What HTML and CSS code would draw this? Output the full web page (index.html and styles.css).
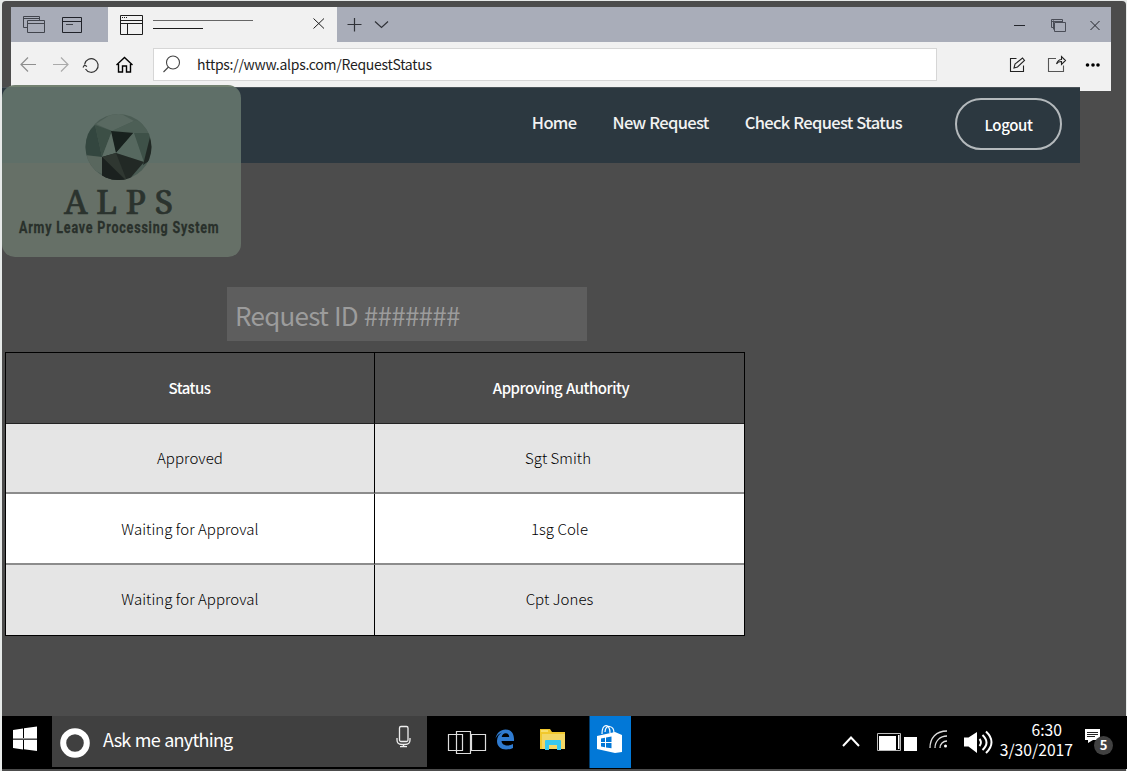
FILE: index.html
```html
<!DOCTYPE html>
<html lang="en">
<head>
<meta charset="utf-8">
<title>ALPS - Request Status</title>
<link rel="stylesheet" href="styles.css">
</head>
<body>
<div class="desktop">
  <section class="browser">
    <div class="tabstrip">
      <div class="tabtools">
        <svg width="97" height="35" fill="none" stroke="#41444c"><path d="M16.500 20.500h-4v-11h16v4M12.500 11.500h16M16.500 13.500h17v12h-17zM16.500 16.500h17"/><path stroke="#202229" d="M51.500 10.500h19v15h-19zM51.500 14.500h19"/><path d="M55 17.500h7"/></svg>
      </div>
      <div class="tab">
        <svg width="229" height="35" fill="none" stroke="#1c1c1c"><path d="M12.500 8.500h22v19h-22zM12.500 13.500h22M12.500 16.500h22M19.500 16.500v11"/><path stroke-dasharray="1 1" d="M14 10.500h5"/><path stroke="#666" d="M45 13.500h100"/><path d="M45 21.500h50M205.500 11.500l10.500 10M216 11.500l-10.500 10"/></svg>
      </div>
      <svg width="60" height="35" fill="none" stroke="#303238" stroke-width="1.200"><path d="M10.500 17.500h14M17.500 11v13.500M38 14.500l6.500 6 6.500-6"/></svg>
      <svg class="winctl" width="110" height="35" fill="none" stroke="#24262d"><path d="M13 18.500h11M89.500 14l9 9M98.500 14l-9 9"/><path stroke="#4a4d57" d="M52.500 20.500h-2v-8h11v3M50.500 14.500h11M53.500 15.500h11v9h-11zM52.500 22.500v-9"/></svg>
    </div>
    <div class="toolbar">
      <svg width="142" height="48" fill="none" stroke="#8f8f8f" stroke-width="1.200"><path d="M25 22.500h-15M17 15.500l-7 7 7 7"/><path stroke="#aaa" d="M42 22.500h15M50 15.500l7 7-7 7"/><path stroke="#333" d="M74.500 27a6.800 6.800 0 1 0-.8-5M72 25.500l1.500-2.500 2.500 1.500"/><path stroke="#000" stroke-width="1.400" d="M105.500 23l8-7.500 8 7.500M107.500 22v8h4v-6h4v6h4v-8"/></svg>
      <div class="address">
        <svg width="43" height="32" fill="none" stroke="#444" stroke-width="1.100"><circle cx="19" cy="13.500" r="6.500"/><path d="M14.500 18l-5 5"/></svg>
        <span class="url">https://www.alps.com/RequestStatus</span>
      </div>
      <svg class="actions" width="110" height="48" fill="none" stroke="#222" stroke-width="1.100"><path d="M15.500 16.500h-6v13h13v-6M13 26l1-4 7.500-6 2 2.500-7 6.500z"/><path stroke="#555" d="M55 16.500h-7.500v13h15v-6"/><path d="M55.500 22c1-3 3-4.500 5-4.500v-3l4 4-4 4v-3c-3 0-4 .5-5 2.500z"/><g fill="#000" stroke="none"><circle cx="86.500" cy="23" r="1.800"/><circle cx="92" cy="23" r="1.800"/><circle cx="97" cy="23" r="1.800"/></g></svg>
    </div>
  </section>

  <header class="navbar">
    <nav class="links"><a>Home</a><a>New Request</a><a>Check Request Status</a></nav>
    <button class="logout">Logout</button>
    <div class="logo">
      <svg width="239" height="172">
        <defs><clipPath id="ball"><circle cx="116.500" cy="62" r="33"/></clipPath></defs>
        <g clip-path="url(#ball)">
          <path fill="#4b5c54" d="M83 29h68v67H83z"/>
          <path fill="#596961" d="M94 39l20-13 18 10-22 10z"/>
          <path fill="#4d5f56" d="M132 36l20 0v14h-20zM94 39l16 7 22-10v11l-22-1z"/>
          <path fill="#33463f" d="M93 40l-14 14v17l21 1z"/>
          <path fill="#3c4f46" d="M93 40l17 6-10 26z"/>
          <path fill="#5e6f66" d="M110 46l4 22-14 4z"/>
          <path fill="#18211e" d="M109 46l23 2-18 20z"/>
          <path fill="#56685f" d="M132 47l10 30-28-9z"/>
          <path fill="#3e5148" d="M132 48h18l-8 29z"/>
          <path fill="#202824" d="M148 52l5 20-12 8z"/>
          <path fill="#59675e" d="M83 70l17 2v17l-12-6z"/>
          <path fill="#222925" d="M100 72l14-4 28 9-17 20H100z"/>
          <path fill="#2f3731" d="M100 72l14-4 11 28z"/>
          <path fill="#1b211f" d="M100 72v25h25z"/>
        </g>
        <text class="brand" x="62" y="129" textLength="109">ALPS</text>
        <text class="tagline" transform="translate(17 148) scale(.78 1)" textLength="256">Army Leave Processing System</text>
      </svg>
    </div>
  </header>

  <main class="content">
    <div class="request-id">Request ID #######</div>
    <div class="table">
      <div class="cell head"><span class="status">Status</span></div><div class="cell head"><span class="authority">Approving Authority</span></div>
      <div class="cell odd">Approved</div><div class="cell odd"><span class="smith">Sgt Smith</span></div>
      <div class="cell even">Waiting for Approval</div><div class="cell even">1sg Cole</div>
      <div class="cell odd last">Waiting for Approval</div><div class="cell odd last">Cpt Jones</div>
    </div>
  </main>

  <footer class="taskbar">
    <div class="start"><svg width="50" height="52" fill="#fff"><path d="M11 14l10-1.500v10H11zM22 12.300l13-1.800v12H22zM11 24h10v9.500L11 32zM22 24h13v11l-13-1.800z"/><path fill="#999" d="M11 22h24v1.500H11z"/></svg></div>
    <div class="search">
      <svg width="51" height="51"><circle cx="23" cy="27" r="11.800" fill="none" stroke="#fff" stroke-width="6"/></svg>
      <span class="ask">Ask me anything</span>
      <svg class="mic" width="34" height="51" fill="none" stroke="#eee" stroke-width="1.300"><rect x="6.500" y="10.500" width="8.500" height="15" rx="1.500"/><path d="M4 22v2q0 4.500 5 4.500h3q5 0 5-4.500v-2M10.500 28.500v2M7 30.700h7"/></svg>
    </div>
    <div class="apps">
      <svg width="204" height="53">
        <path fill="none" stroke="#ddd" stroke-width="1.200" d="M21.500 18.500h14v16h-14zM29.500 15.500h14v22h-14zM44.500 18.500h14v16h-14z"/>
        <path fill="#2f7bd0" d="M68.500 23c1-6 5-9.500 10-9.500 6 0 9 4.500 8.500 11.500H74.500c.2 3 3 4.500 6 4.500 2 0 4-.7 5.500-1.500v4c-2 1-4 1.500-7 1.500-5 0-9-3-9-8.500 0-4 2-7 5-8.500-3 1-5 3-6.500 6zM74.700 21h7.500c0-2-1-3.800-3.500-3.800-2 0-3.700 1.600-4 3.800z"/>
        <path fill="#f1c82e" d="M113 13h10l2 3h13v17h-25z"/><path fill="#f3d765" d="M115 18h23v15h-23z"/><path fill="#fff5a8" d="M114 14.500h7v1h-7z"/><path fill="#36c8ef" d="M118 24h15q1 0 1 1v9h-4v-5h-8v5h-4v-9q0-1 1-1z"/>
        <path fill="#0278d7" d="M162.500 0h41.500v52h-41.500z"/><path fill="#fff" d="M170 20l18-4 7 3v17l-7 1-18-4z"/><path fill="none" stroke="#fff" stroke-width="1.200" d="M175 18c0-11 8-11 8-1M178 16c0-8 9-7 9 1"/><path fill="#0278d7" d="M174 22.500l4-.8v4.300h-4zM179 21.500l5.500-1V26H179zM174 27h4v4.200l-4-.7zM179 27h5.500v5.300l-5.500-.9z"/>
      </svg>
    </div>
    <div class="tray">
      <svg width="165" height="53" fill="none" stroke="#fff">
        <path stroke-width="2" d="M12 30l8-8.500 8 8.500"/>
        <path stroke="#bbb" d="M46.500 17.500h23v17h-23z"/><path fill="#fff" stroke="none" d="M48 20h17v14H48zM73 21h13v14H73zM67 19h1.500v14H67z"/>
        <path stroke-width="1.300" stroke="#ddd" d="M99 32c0-10 6-17 17-17M104 32c0-7 5-12 12-12M109 32c0-4 3-7 7-7"/><circle cx="114.500" cy="30" r="1.500" fill="#fff" stroke="none"/>
        <path fill="#fff" stroke="none" d="M133 21.500h4.500L146 16v21l-8.500-6.500H133z"/><path stroke-width="2" d="M148.500 23q3 3.500 0 7M151.500 19q8 7.500 0 15M155 15.500q11 10.500 0 21.500"/>
      </svg>
      <div class="clock"><span class="time">6:30</span><span class="date">3/30/2017</span></div>
      <div class="notice"><svg width="20" height="20"><path fill="#fff" d="M1 1h15v11H9l-5 3v-3H1z"/><path stroke="#222" d="M3 4.500h11M3 6.500h11M3 8.500h8"/></svg><span class="badge">5</span></div>
    </div>
  </footer>
</div>
</body>
</html>
```
FILE: styles.css
```css
* { box-sizing: border-box; }
body { margin: 0; background: #e7eae9; font-family: "Noto Sans CJK SC", "Open Sans", sans-serif; }
svg { display: block; flex: none; }
.desktop { width: 1124px; height: 770px; margin: 1px 0 0 2px; background: #4c4c4c; border-radius: 4px 4px 0 0; display: flex; flex-direction: column; padding-top: 6px; }
.browser { width: 1100px; height: 84px; margin-left: 9px; background: #f1f1f1; flex: none; }
.tabstrip { height: 35px; display: flex; background: #a9adb9; }
.tab { background: #f1f1f1; width: 229px; }
.winctl { margin-left: auto; }
.toolbar { display: flex; height: 48px; }
.address { width: 784px; height: 33px; margin-top: 6px; border: 1px solid #d6d6d6; background: #fff; display: flex; align-items: center; }
.url { font-size: 14px; line-height: 22px; letter-spacing: -0.28px; color: #1e1e1e; white-space: nowrap; padding-bottom: 1px; }
.actions { margin-left: auto; }
.navbar { position: relative; width: 1078px; height: 76px; margin-top: -4px; background: #2c3840; display: flex; justify-content: flex-end; flex: none; border-top: 1px solid #4b5359; }
.links { display: flex; gap: 36px; margin: 22px 53px 0 0; color: #f2f2f2; font-size: 16.5px; letter-spacing: -0.66px; word-spacing: 0.6px; line-height: 24px; font-weight: 500; white-space: nowrap; }
.logout { width: 107px; height: 52px; margin: 10px 18px 0 0; padding: 2px 0 0; border: 2px solid #b4b9bc; border-radius: 26px; background: none; color: #fff; font: 500 15px/22px "Noto Sans CJK SC", sans-serif; letter-spacing: -0.4px; }
.logo { position: absolute; left: 0; top: -3px; width: 239px; height: 172px; border-radius: 13px; background: linear-gradient(#738271 2px, #5f6f68 2px, #5f6f68 78px, #667067 78px); }
.brand { font: 500 33px "Noto Serif", "DejaVu Serif Condensed", "DejaVu Serif", serif; fill: #2b332e; stroke: #2b332e; stroke-width: 0.6px; }
.tagline { font: 700 16px Roboto, sans-serif; fill: #29302b; stroke: #29302b; stroke-width: 0.3px; }
.content { flex: 1; padding: 124px 0 0 3px; }
.request-id { width: 360px; height: 54px; margin-left: 222px; padding: 9px 8px; background: #5e5e5e; color: #9c9c9c; font-size: 26px; letter-spacing: -0.75px; word-spacing: 0.8px; line-height: 37px; white-space: nowrap; }
.table { width: 740px; height: 284px; margin-top: 11px; border: 1px solid #000; display: grid; grid-template-columns: 369px 1fr; grid-template-rows: 71px 70px 71px 1fr; }
.cell { display: flex; align-items: center; justify-content: center; font-size: 15px; letter-spacing: 0.05px; line-height: 22px; color: #000; border-bottom: 2px solid #8c8c8c; font-weight: 300; white-space: nowrap; }
.cell:nth-child(odd) { border-right: 1px solid #000; }
.cell.last { border-bottom: 0; padding-bottom: 2px; }
.cell.head { color: #fff; font-weight: 500; letter-spacing: -0.5px; word-spacing: 1px; border-bottom: 1px solid #222; }
.status { margin-right: 1px; }
.authority { margin-left: 3px; }
.odd { background: #e5e5e5; }
.even { background: #fff; }
.smith { margin-right: 3px; }
.taskbar { height: 53px; margin-bottom: 2px; width: 1125px; background: #000; display: flex; color: #fff; flex: none; }
.start { width: 50px; }
.search { width: 375px; height: 51px; background: #404040; display: flex; align-items: center; }
.ask { font-size: 18px; letter-spacing: -0.75px; word-spacing: 1px; line-height: 26px; white-space: nowrap; padding-bottom: 5px; }
.mic { margin-left: auto; }
.tray { margin-left: auto; display: flex; }
.clock { width: 80px; display: flex; flex-direction: column; align-items: flex-end; padding-top: 4px; line-height: 20px; font-size: 15.7px; white-space: nowrap; }
.time { margin-right: 14px; }
.date { margin-right: 3px; }
.notice { position: relative; width: 51px; padding: 12px 0 0 8px; }
.badge { position: absolute; left: 18px; top: 20px; width: 19px; height: 19px; border-radius: 10px; background: #414141; text-align: center; font-size: 13px; line-height: 18px; font-weight: 700; }
```
